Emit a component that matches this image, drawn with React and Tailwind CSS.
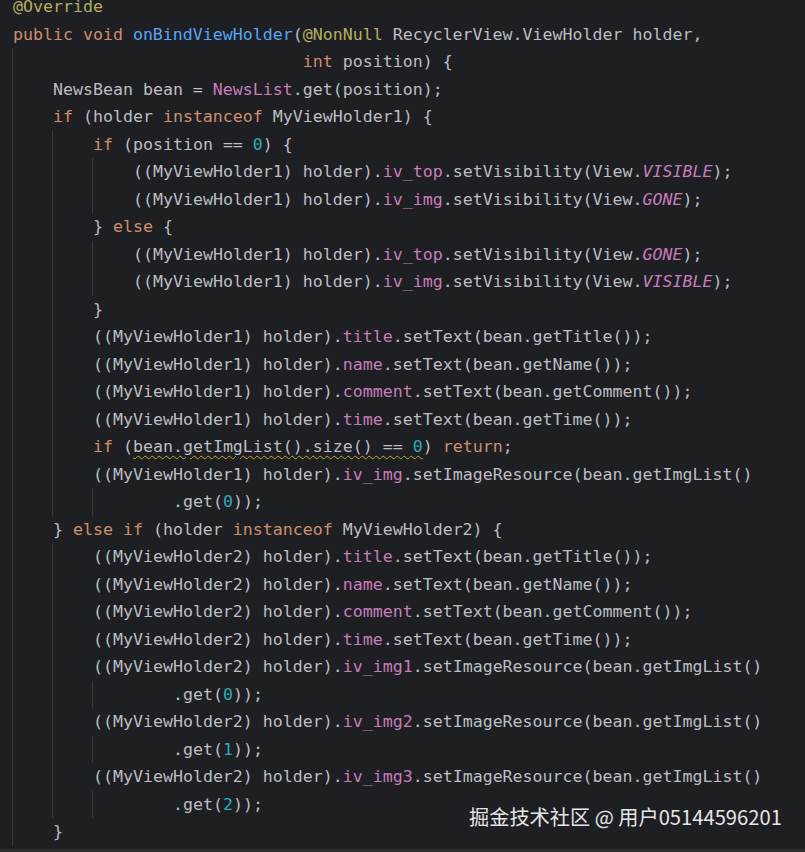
import React from 'react';

const K = 'text-[#cf8e6d]';
const F = 'text-[#c77dbb]';
const S = 'text-[#c77dbb] italic';
const N = 'text-[#2aacb8]';
const M = 'text-[#56a8f5]';
const A = 'text-[#b3ae60]';

const holderLine = (n, field, rest) => [['((MyViewHolder' + n + ') holder).'], [field, F], ...rest];

const lines = [
  { g: 0, t: [['@Override', A]] },
  { g: 0, t: [['public void ', K], ['onBindViewHolder', M], ['('], ['@NonNull', A], [' RecyclerView.ViewHolder holder,']] },
  { g: 1, t: [['                         '], ['int', K], [' position) {']] },
  { g: 1, t: [['NewsBean bean = '], ['NewsList', F], ['.get(position);']] },
  { g: 1, t: [['if', K], [' (holder '], ['instanceof', K], [' MyViewHolder1) {']] },
  { g: 2, t: [['if', K], [' (position == '], ['0', N], [') {']] },
  { g: 3, t: holderLine(1, 'iv_top', [['.setVisibility(View.'], ['VISIBLE', S], [');']]) },
  { g: 3, t: holderLine(1, 'iv_img', [['.setVisibility(View.'], ['GONE', S], [');']]) },
  { g: 2, t: [['} '], ['else', K], [' {']] },
  { g: 3, t: holderLine(1, 'iv_top', [['.setVisibility(View.'], ['GONE', S], [');']]) },
  { g: 3, t: holderLine(1, 'iv_img', [['.setVisibility(View.'], ['VISIBLE', S], [');']]) },
  { g: 2, t: [['}']] },
  { g: 2, t: holderLine(1, 'title', [['.setText(bean.getTitle());']]) },
  { g: 2, t: holderLine(1, 'name', [['.setText(bean.getName());']]) },
  { g: 2, t: holderLine(1, 'comment', [['.setText(bean.getComment());']]) },
  { g: 2, t: holderLine(1, 'time', [['.setText(bean.getTime());']]) },
  { g: 2, warn: true },
  { g: 2, t: holderLine(1, 'iv_img', [['.setImageResource(bean.getImgList()']]) },
  { g: 3, t: [['    .get('], ['0', N], ['));']] },
  { g: 1, t: [['} '], ['else if', K], [' (holder '], ['instanceof', K], [' MyViewHolder2) {']] },
  { g: 2, t: holderLine(2, 'title', [['.setText(bean.getTitle());']]) },
  { g: 2, t: holderLine(2, 'name', [['.setText(bean.getName());']]) },
  { g: 2, t: holderLine(2, 'comment', [['.setText(bean.getComment());']]) },
  { g: 2, t: holderLine(2, 'time', [['.setText(bean.getTime());']]) },
  { g: 2, t: holderLine(2, 'iv_img1', [['.setImageResource(bean.getImgList()']]) },
  { g: 3, t: [['    .get('], ['0', N], ['));']] },
  { g: 2, t: holderLine(2, 'iv_img2', [['.setImageResource(bean.getImgList()']]) },
  { g: 3, t: [['    .get('], ['1', N], ['));']] },
  { g: 2, t: holderLine(2, 'iv_img3', [['.setImageResource(bean.getImgList()']]) },
  { g: 3, t: [['    .get('], ['2', N], ['));']] },
  { g: 1, t: [['}']] },
];

const CodeLine = ({ line }) => (
  <div className="flex h-[27.5px] items-stretch pl-[12px] leading-[27.5px] whitespace-pre">
    {Array.from({ length: line.g }).map((_, i) => (
      <span key={i} className="w-[40px] shrink-0 border-l border-[#36383d]" />
    ))}
    <span className="pl-px">
      {line.warn ? (
        <>
          <span className={K}>if</span> (
          <span className="underline decoration-wavy decoration-[#bba63c] decoration-1 underline-offset-[3px]">
            bean.getImgList().size() == <span className={N}>0</span>
          </span>
          ) <span className={K}>return</span>;
        </>
      ) : (
        line.t.map(([text, cls], i) => (
          <span key={i} className={cls}>{text}</span>
        ))
      )}
    </span>
  </div>
);

const App = () => {
  return (
    <div className="relative flex h-[852px] w-[805px] flex-col overflow-hidden bg-[#1e1f22]">
      {/* Editor */}
      <div className="flex-1 overflow-hidden">
        <div className="mt-[-7px] font-['DejaVu_Sans_Mono',monospace] text-[16.6px] text-[#bcbec4]">
          {lines.map((line, i) => (
            <CodeLine key={i} line={line} />
          ))}
        </div>
      </div>
      <div className="h-[3px] bg-[#2b2d30]" />

      {/* Watermark */}
      <div className="absolute left-[469px] top-[803px] font-['Noto_Sans_CJK_SC',sans-serif] text-[20.2px] leading-[28px] text-[#e6e6e6]">
        掘金技术社区 @ 用户05144596201
      </div>
    </div>
  );
};

export default App;
